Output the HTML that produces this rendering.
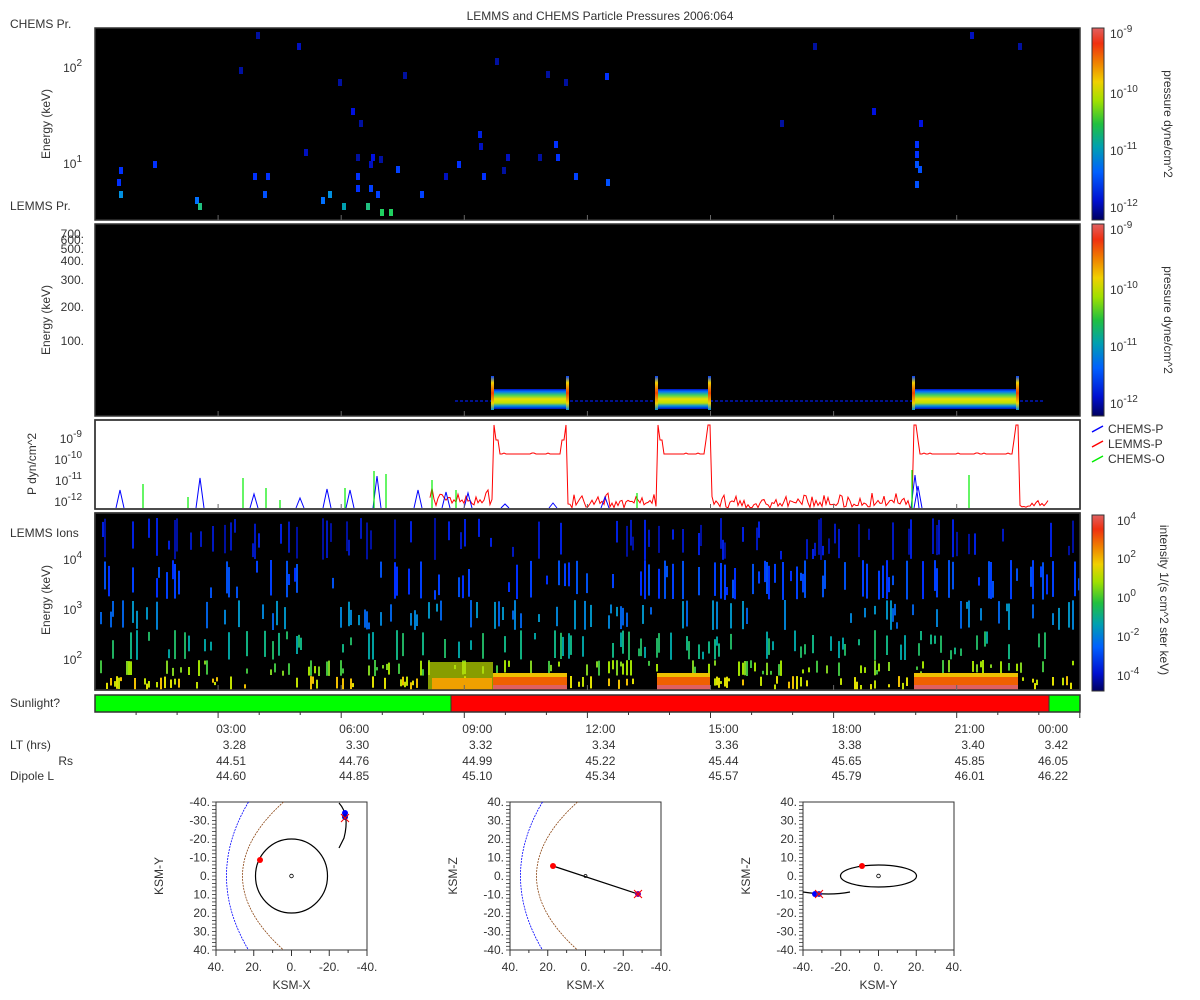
<!DOCTYPE html>
<html><head><meta charset="utf-8">
<style>
html,body{margin:0;padding:0;background:#fff;width:1200px;height:1000px;overflow:hidden}
svg{display:block;font-family:"Liberation Sans","DejaVu Sans",sans-serif;}
text{fill:#333;font-size:12px}
</style></head>
<body>
<svg id="s" width="1200" height="1000" viewBox="0 0 1200 1000" xmlns="http://www.w3.org/2000/svg">
<defs>
<linearGradient id="cb" x1="0" y1="1" x2="0" y2="0">
<stop offset="0" stop-color="#000060"/><stop offset="0.1" stop-color="#0010d0"/><stop offset="0.25" stop-color="#0060ff"/>
<stop offset="0.38" stop-color="#00a0b0"/><stop offset="0.5" stop-color="#20c040"/><stop offset="0.62" stop-color="#a0e000"/>
<stop offset="0.72" stop-color="#f0d000"/><stop offset="0.82" stop-color="#f08000"/><stop offset="0.92" stop-color="#f03010"/><stop offset="1" stop-color="#e06060"/>
</linearGradient>
<linearGradient id="band" x1="0" y1="0" x2="0" y2="1">
<stop offset="0" stop-color="#0010c0"/><stop offset="0.12" stop-color="#0070ff"/><stop offset="0.3" stop-color="#40d060"/>
<stop offset="0.5" stop-color="#e8e000"/><stop offset="0.7" stop-color="#c0e000"/><stop offset="0.85" stop-color="#0090e0"/><stop offset="1" stop-color="#0010c0"/>
</linearGradient>
<linearGradient id="edge" x1="0" y1="0" x2="0" y2="1">
<stop offset="0" stop-color="#0040ff"/><stop offset="0.2" stop-color="#f0d000"/><stop offset="0.5" stop-color="#f04000"/><stop offset="0.8" stop-color="#f0d000"/><stop offset="1" stop-color="#0090e0"/>
</linearGradient>
</defs>
<text x="600" y="20" text-anchor="middle">LEMMS and CHEMS Particle Pressures  2006:064</text>
<text x="10" y="28">CHEMS Pr.</text>
<text x="10" y="210">LEMMS Pr.</text>

<rect x="95" y="28" width="985" height="192" fill="#000" stroke="#333" stroke-width="1.5"/>
<g id="p1"></g>
<text x="82" y="72" text-anchor="end">10<tspan dy="-6" font-size="10">2</tspan></text>
<text x="82" y="168" text-anchor="end">10<tspan dy="-6" font-size="10">1</tspan></text>
<text transform="translate(50,124) rotate(-90)" text-anchor="middle">Energy (keV)</text>
<rect x="1092" y="28" width="12" height="192" fill="url(#cb)" stroke="#333"/>
<text x="1110" y="38">10<tspan dy="-6" font-size="10">-9</tspan></text>
<text x="1110" y="212">10<tspan dy="-6" font-size="10">-12</tspan></text>
<text x="1110" y="98">10<tspan dy="-6" font-size="10">-10</tspan></text>
<text x="1110" y="155">10<tspan dy="-6" font-size="10">-11</tspan></text>
<text transform="translate(1164,124) rotate(90)" text-anchor="middle">pressure dyne/cm^2</text>

<rect x="95" y="224" width="985" height="192" fill="#000" stroke="#333" stroke-width="1.5"/>
<line x1="455" y1="401" x2="1045" y2="401" stroke="#0018c0" stroke-width="1.5" stroke-dasharray="3,2"/>
<rect x="493" y="389" width="74" height="20" fill="url(#band)"/>
<rect x="657" y="389" width="53" height="20" fill="url(#band)"/>
<rect x="914" y="389" width="104" height="20" fill="url(#band)"/>
<rect x="491" y="376" width="3" height="34" fill="url(#edge)"/><rect x="566" y="376" width="3" height="34" fill="url(#edge)"/>
<rect x="655" y="376" width="3" height="34" fill="url(#edge)"/><rect x="708" y="376" width="3" height="34" fill="url(#edge)"/>
<rect x="912" y="376" width="3" height="34" fill="url(#edge)"/><rect x="1016" y="376" width="3" height="34" fill="url(#edge)"/>
<g font-size="11">
<text x="84" y="238" text-anchor="end">700.</text><text x="84" y="244" text-anchor="end">600.</text>
<text x="84" y="253" text-anchor="end">500.</text><text x="84" y="265" text-anchor="end">400.</text>
<text x="84" y="284" text-anchor="end">300.</text><text x="84" y="345" text-anchor="end">100.</text>
<text x="84" y="311" text-anchor="end">200.</text></g>
<text transform="translate(50,320) rotate(-90)" text-anchor="middle">Energy (keV)</text>
<rect x="1092" y="224" width="12" height="192" fill="url(#cb)" stroke="#333"/>
<text x="1110" y="234">10<tspan dy="-6" font-size="10">-9</tspan></text>
<text x="1110" y="408">10<tspan dy="-6" font-size="10">-12</tspan></text>
<text x="1110" y="294">10<tspan dy="-6" font-size="10">-10</tspan></text>
<text x="1110" y="351">10<tspan dy="-6" font-size="10">-11</tspan></text>
<text transform="translate(1164,320) rotate(90)" text-anchor="middle">pressure dyne/cm^2</text>

<rect x="95" y="420" width="985" height="89" fill="#fff" stroke="#333" stroke-width="1.5"/>
<g id="p3"></g>
<text x="82" y="443" text-anchor="end">10<tspan dy="-6" font-size="10">-9</tspan></text>
<text x="82" y="464" text-anchor="end">10<tspan dy="-6" font-size="10">-10</tspan></text>
<text x="82" y="485" text-anchor="end">10<tspan dy="-6" font-size="10">-11</tspan></text>
<text x="82" y="506" text-anchor="end">10<tspan dy="-6" font-size="10">-12</tspan></text>
<text transform="translate(36,464) rotate(-90)" text-anchor="middle">P dyn/cm^2</text>
<line x1="1092" y1="432" x2="1103" y2="426" stroke="#00f" stroke-width="1.5"/><text x="1108" y="433">CHEMS-P</text>
<line x1="1092" y1="447" x2="1103" y2="441" stroke="#f00" stroke-width="1.5"/><text x="1108" y="448">LEMMS-P</text>
<line x1="1092" y1="462" x2="1103" y2="456" stroke="#0e0" stroke-width="1.5"/><text x="1108" y="463">CHEMS-O</text>

<rect x="95" y="513" width="985" height="177" fill="#000" stroke="#333" stroke-width="1.5"/>
<g id="p4"></g>
<text x="10" y="537">LEMMS Ions</text>
<text x="82" y="564" text-anchor="end">10<tspan dy="-6" font-size="10">4</tspan></text>
<text x="82" y="614" text-anchor="end">10<tspan dy="-6" font-size="10">3</tspan></text>
<text x="82" y="664" text-anchor="end">10<tspan dy="-6" font-size="10">2</tspan></text>
<text transform="translate(50,600) rotate(-90)" text-anchor="middle">Energy (keV)</text>
<rect x="1092" y="515" width="12" height="176" fill="url(#cb)" stroke="#333"/>
<text x="1117" y="525">10<tspan dy="-6" font-size="10">4</tspan></text>
<text x="1117" y="563">10<tspan dy="-6" font-size="10">2</tspan></text>
<text x="1117" y="602">10<tspan dy="-6" font-size="10">0</tspan></text>
<text x="1117" y="641">10<tspan dy="-6" font-size="10">-2</tspan></text>
<text x="1117" y="680">10<tspan dy="-6" font-size="10">-4</tspan></text>
<text transform="translate(1160,600) rotate(90)" text-anchor="middle">intensity 1/(s cm^2 ster keV)</text>

<text x="10" y="707">Sunlight?</text>
<rect x="95" y="695" width="356" height="17" fill="#00ff00"/>
<rect x="451" y="695" width="598" height="17" fill="#ff0000"/>
<rect x="1049" y="695" width="31" height="17" fill="#00ff00"/>
<rect x="95" y="695" width="985" height="17" fill="none" stroke="#333" stroke-width="1.5"/>
<line x1="451" y1="695" x2="451" y2="712" stroke="#333"/><line x1="1049" y1="695" x2="1049" y2="712" stroke="#333"/>
<g id="ax"></g>
<text x="10" y="749">LT (hrs)</text><text x="73" y="765" text-anchor="end">Rs</text><text x="10" y="780">Dipole L</text>
<g id="orb"></g>
</svg>
<script>
var s=123456;function r(){s=(s*16807)%2147483647;return s/2147483647;}
var NS="http://www.w3.org/2000/svg";
function el(p,t,a){var e=document.createElementNS(NS,t);for(var k in a)e.setAttribute(k,a[k]);p.appendChild(e);return e;}
function G(id){return document.getElementById(id);}
var p1=G('p1');
var d1=[[119,183,'#0030ff'],[121,171,'#0030ff'],[121,195,'#0090e0'],[155,165,'#0030ff'],[197,201,'#0070ff'],[200,207,'#20c080'],[241,71,'#0010a0'],[258,36,'#0010a0'],[299,47,'#0010c0'],[306,153,'#0010c0'],[255,177,'#0030ff'],[268,177,'#0030ff'],[265,195,'#0050ff'],[323,201,'#0070ff'],[330,195,'#0090e0'],[340,83,'#0010a0'],[344,207,'#00a0b0'],[353,112,'#0010e0'],[358,158,'#0010a0'],[358,177,'#0030ff'],[358,189,'#0030ff'],[361,124,'#0010a0'],[368,207,'#20c080'],[371,165,'#0010c0'],[371,189,'#0040ff'],[373,158,'#0010e0'],[378,195,'#0040ff'],[381,160,'#0010a0'],[382,213,'#20d060'],[391,213,'#20d060'],[398,170,'#0040ff'],[405,76,'#0010a0'],[422,195,'#0040ff'],[446,177,'#0010c0'],[459,165,'#0030ff'],[480,135,'#0020e0'],[481,147,'#0010c0'],[484,177,'#0030ff'],[497,62,'#0010a0'],[504,171,'#0010a0'],[508,158,'#0010c0'],[540,158,'#0010a0'],[548,75,'#0010a0'],[556,145,'#0030ff'],[558,158,'#0030ff'],[566,83,'#0010a0'],[576,177,'#0040ff'],[607,77,'#0030ff'],[608,183,'#0050ff'],[782,124,'#0010a0'],[815,47,'#0010a0'],[874,112,'#0010e0'],[917,145,'#0030ff'],[917,155,'#0030ff'],[917,165,'#0050ff'],[917,185,'#0050ff'],[920,170,'#0050ff'],[921,124,'#0010e0'],[972,36,'#0010c0'],[1020,47,'#0010a0']];
d1.forEach(function(d){el(p1,'rect',{x:d[0]-2,y:d[1]-4,width:4,height:7,fill:d[2]});});
var p3=G('p3');
function plat(x){var a=[[493,567],[657,710],[914,1018]];for(var i=0;i<3;i++)if(x>=a[i][0]&&x<=a[i][1])return a[i];return null;}
var pts=[];
for(var x=430;x<1050;x+=2){var y;var p=plat(x);
 if(p){ if(x-p[0]<3||p[1]-x<3)y=425; else if(x-p[0]<6||p[1]-x<6)y=440; else y=454+(r()<0.15?-1:0);}
 else if(x<493) y=496+r()*10-(r()<0.2?8:0);
 else y=500+r()*8-(r()<0.15?7:0);
 if(y>508)y=508; pts.push(x+','+y.toFixed(1));}
el(p3,'polyline',{points:pts.join(' '),fill:'none',stroke:'#f00','stroke-width':1});
var bl=[[120,490],[200,478],[254,494],[300,498],[327,489],[350,490],[377,476],[418,490],[446,492],[468,493],[505,504],[553,503],[605,497],[915,475],[918,486]];
bl.forEach(function(b){el(p3,'polyline',{points:(b[0]-4)+',508 '+b[0]+','+b[1]+' '+(b[0]+4)+',508',fill:'none',stroke:'#00f','stroke-width':1});});
var gl=[[143,484],[188,497],[243,478],[266,488],[280,500],[345,488],[374,471],[386,474],[432,480],[456,490],[637,493],[912,470],[969,475]];
gl.forEach(function(b){el(p3,'line',{x1:b[0],y1:508,x2:b[0],y2:b[1],stroke:'#0e0','stroke-width':1.2});});
el(p3,'rect',{x:95,y:420,width:985,height:89,fill:'none',stroke:'#333','stroke-width':1.5});
var p4=G('p4');
var bands=[[518,560,['#0010a0','#0018c0','#0020e0']],[560,600,['#0030ff','#0040ff','#0050f0']],[600,630,['#0060e0','#0080d0','#0090c0']],[630,660,['#00a0a0','#10b080','#20b060']],[660,676,['#40c040','#80d020','#a0e000']],[676,690,['#c0e000','#e0e000','#f0c000']]];
var probs=[0.16,0.18,0.16,0.18,0.2,0.22];
for(var x=96;x<1079;x+=2){
 for(var b=0;b<bands.length;b++){var B=bands[b];
  if(r()<probs[b]){var h=(B[1]-B[0])*(0.2+r()*0.8);var y0=B[0]+r()*(B[1]-B[0]-h);
   el(p4,'rect',{x:x,y:y0.toFixed(1),width:2,height:h.toFixed(1),fill:B[2][Math.floor(r()*3)]});}
 }}
el(p4,'rect',{x:428,y:662,width:65,height:28,fill:'#c0e000',opacity:0.7});
el(p4,'rect',{x:432,y:678,width:60,height:12,fill:'#f0a000'});
[[493,567],[657,710],[914,1018]].forEach(function(p){
 el(p4,'rect',{x:p[0],y:673,width:p[1]-p[0],height:4,fill:'#f0c000'});
 el(p4,'rect',{x:p[0],y:677,width:p[1]-p[0],height:9,fill:'#f06000'});
 el(p4,'rect',{x:p[0],y:685,width:p[1]-p[0],height:5,fill:'#e06060'});});
el(p4,'rect',{x:95,y:513,width:985,height:177,fill:'none',stroke:'#333','stroke-width':1.5});
var ax=G('ax');
var times=['03:00','06:00','09:00','12:00','15:00','18:00','21:00','00:00'];
var LT=['3.28','3.30','3.32','3.34','3.36','3.38','3.40','3.42'];
var RS=['44.51','44.76','44.99','45.22','45.44','45.65','45.85','46.05'];
var DL=['44.60','44.85','45.10','45.34','45.57','45.79','46.01','46.22'];
for(var i=0;i<8;i++){var tx=95+123.1*(i+1);var te=(i==7)?1068:tx+28;
 el(ax,'line',{x1:tx,y1:712,x2:tx,y2:718,stroke:'#333'});
 for(var j=1;j<3;j++)el(ax,'line',{x1:tx-41*j,y1:712,x2:tx-41*j,y2:715,stroke:'#333'});
 [[times[i],733],[LT[i],749],[RS[i],765],[DL[i],780]].forEach(function(a){var t=el(ax,'text',{x:te,y:a[1],'text-anchor':'end'});t.textContent=a[0];});
}
[[28,220],[224,416],[420,509],[513,690]].forEach(function(pp){for(var i=1;i<8;i++){var tx=95+123.1*i;el(ax,'line',{x1:tx,y1:pp[1]-5,x2:tx,y2:pp[1],stroke:'#666'});}});
var orb=G('orb');
function plot(x0,ylab,xlab,yl,xl,fn){
 var y0=802,w=151,h=148;
 el(orb,'rect',{x:x0,y:y0,width:w,height:h,fill:'#fff',stroke:'#333'});
 for(var k=0;k<=40;k++){var yy=y0+h*k/40;el(orb,'line',{x1:x0-4,y1:yy,x2:x0,y2:yy,stroke:'#333','stroke-width':0.8});}
 for(var k=0;k<=8;k++){var yy=y0+h*k/8;var t=el(orb,'text',{x:x0-6,y:yy+4,'text-anchor':'end','font-size':11});t.textContent=yl[k];
   var xx=x0+w*k/8;el(orb,'line',{x1:xx,y1:y0+h,x2:xx,y2:y0+h+(k%2?3:6),stroke:'#333'});}
 for(var k=0;k<5;k++){var t=el(orb,'text',{x:x0+w*k/4,y:y0+h+21,'text-anchor':'middle','font-size':11});t.textContent=xl[k];}
 var t=el(orb,'text',{x:x0+w/2,y:y0+h+39,'text-anchor':'middle','font-size':11});t.textContent=xlab;
 var t=el(orb,'text',{transform:'translate('+(x0-53)+','+(y0+h/2)+') rotate(-90)','text-anchor':'middle','font-size':11});t.textContent=ylab;
 fn(x0+w/2,y0+h/2,w/80);
}
var yA=['-40.','-30.','-20.','-10.','0.','10.','20.','30.','40.'],yB=['40.','30.','20.','10.','0.','-10.','-20.','-30.','-40.'];
var xA=['40.','20.','0.','-20.','-40.'],xB=['-40.','-20.','0.','20.','40.'];
function mp(cx,cy){
 el(orb,'path',{d:'M'+(cx-43)+',802 Q'+(cx-87)+','+cy+' '+(cx-43)+',950',fill:'none',stroke:'#00f','stroke-width':0.8,'stroke-dasharray':'2,1'});
 el(orb,'path',{d:'M'+(cx-8)+',802 Q'+(cx-90)+','+cy+' '+(cx-8)+',950',fill:'none',stroke:'#8b4513','stroke-width':0.8,'stroke-dasharray':'2,1'});
}
function mk(x,y,c){el(orb,'circle',{cx:x,cy:y,r:3,fill:c});}
function star(x,y){el(orb,'path',{d:'M'+(x-4)+','+(y-4)+'L'+(x+4)+','+(y+4)+'M'+(x+4)+','+(y-4)+'L'+(x-4)+','+(y+4),stroke:'#f00','stroke-width':1});}
plot(216,'KSM-Y','KSM-X',yA,xA,function(cx,cy,sc){mp(cx,cy);
 el(orb,'ellipse',{cx:cx,cy:cy,rx:36,ry:37,fill:'none',stroke:'#000','stroke-width':1.2});
 el(orb,'circle',{cx:cx,cy:cy,r:1.8,fill:'none',stroke:'#000','stroke-width':0.8});
 el(orb,'path',{d:'M339,803 Q350,815 344,838 L339,848',fill:'none',stroke:'#000','stroke-width':1.2});
 mk(260,860,'#f00');mk(345,813,'#00f');mk(345,817,'#0000c0');star(345,818);});
plot(510,'KSM-Z','KSM-X',yB,xA,function(cx,cy,sc){mp(cx,cy);
 el(orb,'line',{x1:553,y1:866,x2:638,y2:894,stroke:'#000','stroke-width':1.2});
 el(orb,'circle',{cx:cx,cy:cy,r:1.5,fill:'none',stroke:'#000','stroke-width':0.8});
 mk(553,866,'#f00');mk(638,894,'#8000a0');star(638,894);});
plot(803,'KSM-Z','KSM-Y',yB,xB,function(cx,cy,sc){
 el(orb,'ellipse',{cx:cx,cy:cy,rx:38,ry:11,fill:'none',stroke:'#000','stroke-width':1.2});
 el(orb,'circle',{cx:cx,cy:cy,r:1.8,fill:'none',stroke:'#000','stroke-width':0.8});
 el(orb,'path',{d:'M803,892 Q830,896 850,892',fill:'none',stroke:'#000','stroke-width':1.2});
 mk(862,866,'#f00');mk(815,894,'#00f');mk(819,894,'#3030c0');star(819,894);});
</script>
</body></html>
